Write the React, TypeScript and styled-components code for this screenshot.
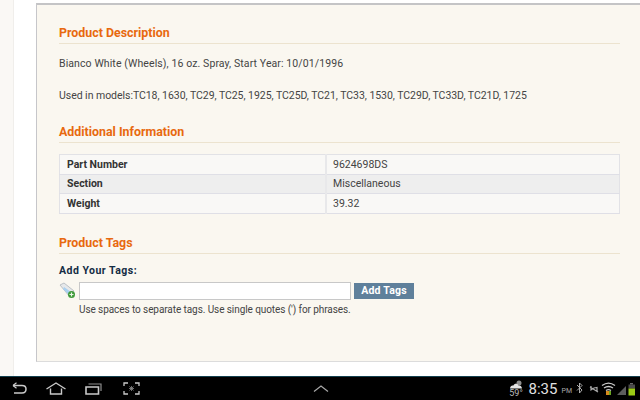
import styled, { createGlobalStyle } from 'styled-components';

const GlobalStyle = createGlobalStyle`
    html, body {
        margin: 0;
        padding: 0;
        background: #fff;
    }
    body {
        width: 640px;
        height: 400px;
        overflow: hidden;
        font-family: Roboto, "Liberation Sans", sans-serif;
    }
`;

const specs = [
    { label: 'Part Number', value: '9624698DS' },
    { label: 'Section', value: 'Miscellaneous' },
    { label: 'Weight', value: '39.32' },
];

const App = () => {
    return (
        <>
            <GlobalStyle />
            <Screen>
                <Page>
                    <LeftRail />
                    <Gutter>
                        <Panel>
                            <Heading>Product Description</Heading>
                            <Text $spacing={0.1}>Bianco White (Wheels), 16 oz. Spray, Start Year: 10/01/1996</Text>
                            <Text $gap={16} $spacing={-0.04}>
                                Used in models:TC18, 1630, TC29, TC25, 1925, TC25D, TC21, TC33, 1530, TC29D, TC33D, TC21D, 1725
                            </Text>
                            <Heading $top={19}>Additional Information</Heading>
                            <SpecTable>
                                <tbody>
                                    {specs.map((row, index) => (
                                        <SpecRow key={row.label} $even={index % 2 === 1}>
                                            <SpecLabel>{row.label}</SpecLabel>
                                            <SpecValue>{row.value}</SpecValue>
                                        </SpecRow>
                                    ))}
                                </tbody>
                            </SpecTable>
                            <Heading $top={20}>Product Tags</Heading>
                            <TagTitle>Add Your Tags:</TagTitle>
                            <TagForm>
                                <TagIcon />
                                <TagFields>
                                    <TagRow>
                                        <TagInput type="text" />
                                        <TagButton>Add Tags</TagButton>
                                    </TagRow>
                                    <Hint>Use spaces to separate tags. Use single quotes (') for phrases.</Hint>
                                </TagFields>
                            </TagForm>
                        </Panel>
                    </Gutter>
                </Page>
                <SystemBar>
                    <NavGroup>
                        <BackIcon />
                        <HomeIcon />
                        <RecentIcon />
                        <ShotIcon />
                    </NavGroup>
                    <ChevronIcon />
                    <Tray>
                        <Weather>
                            <CloudIcon />
                            <Temp>59°</Temp>
                        </Weather>
                        <Clock>8:35</Clock>
                        <Meridiem>PM</Meridiem>
                        <TrayIcons />
                    </Tray>
                </SystemBar>
            </Screen>
        </>
    );
};

export default App;

const TagIcon = () => (
    <TagSvg width="17" height="18" viewBox="0 0 17 18">
        <path d="M1 3 L5 1 L15 9 L11 15 Z" fill="#e6e8ea" stroke="#bcc1c5" strokeWidth="1" />
        <path d="M5 5 L12 10 L10 13 L4 7 Z" fill="#a9d0f0" />
        <circle cx="12.5" cy="12.5" r="3.5" fill="#3f9a3a" />
        <path d="M10.5 12.5 H14.5 M12.5 10.5 V14.5" stroke="#e8f6e4" strokeWidth="1.2" />
    </TagSvg>
);

const BackIcon = () => (
    <NavSvg width="15" height="13" viewBox="0 0 15 13">
        <path d="M1 3.5 H10 C13 3.5 14 5 14 7 C14 9.5 12.5 11 10 11 H2" fill="none" stroke="#c9c9c9" strokeWidth="1.5" />
        <path d="M1 3.5 L4.5 0.8 M1 3.5 L4.5 6.2" stroke="#c9c9c9" strokeWidth="1.2" />
    </NavSvg>
);

const HomeIcon = () => (
    <NavSvg width="20" height="13" viewBox="0 0 20 13">
        <path d="M0.5 7 L10 1 L19.5 7" fill="none" stroke="#c9c9c9" strokeWidth="1.4" />
        <path d="M4.5 6.5 V12 H15.5 V6.5" fill="none" stroke="#c9c9c9" strokeWidth="1.4" />
    </NavSvg>
);

const RecentIcon = () => (
    <NavSvg width="17" height="12" viewBox="0 0 17 12">
        <path d="M1 4 H13.5 V11 H1 Z" fill="none" stroke="#c9c9c9" strokeWidth="1.6" />
        <path d="M3.5 1 H16 V8" fill="none" stroke="#8e8e8e" strokeWidth="1.2" />
    </NavSvg>
);

const ShotIcon = () => (
    <NavSvg $shift={2} width="17" height="13" viewBox="0 0 17 13">
        <path d="M1 4 V1 H5 M12 1 H16 V4 M16 9 V12 H12 M5 12 H1 V9" fill="none" stroke="#c9c9c9" strokeWidth="1.3" />
        <path d="M8.5 4 V9 M6 6.5 H11 M6.5 4.5 L10.5 8.5 M10.5 4.5 L6.5 8.5" stroke="#8c8c8c" strokeWidth="0.8" />
    </NavSvg>
);

const ChevronIcon = () => (
    <ChevronSvg width="16" height="7" viewBox="0 0 16 7">
        <path d="M1 6.5 L8 1 L15 6.5" fill="none" stroke="#a8a8a8" strokeWidth="1.2" />
    </ChevronSvg>
);

const CloudIcon = () => (
    <svg width="15" height="9" viewBox="0 0 15 9">
        <circle cx="10" cy="3" r="2.5" fill="#8f8f8f" />
        <path d="M1 8.5 C1 6 3 5.5 4.5 5.5 C5 3.5 8.5 3 9.5 5.5 C11.5 5 13 6.5 13 8.5 Z" fill="#e4e4e4" />
    </svg>
);

const TrayIcons = () => (
    <TraySvg width="61" height="16" viewBox="0 0 61 16">
        <path d="M1 4 L6 9 L3.5 12 V2 L6 4.5 L1 9.5" fill="none" stroke="#bdbdbd" strokeWidth="0.9" />
        <path d="M14 6 L22 11 M15 5 V9 L18 7 L21 6.5 V10" fill="none" stroke="#a9a9a9" strokeWidth="1.2" />
        <path d="M26 4.5 C30 1.5 35 1.5 39 4.5 M28 7 C31 5 34 5 37 7 M30 9.5 C31.5 8.5 33.5 8.5 35 9.5" fill="none" stroke="#c9c9c9" strokeWidth="1.3" />
        <rect x="30" y="10" width="3" height="4" fill="#d68a1d" />
        <rect x="33" y="10" width="2" height="4" fill="#6aa51e" />
        <path d="M41 14 L50 5 V14 Z" fill="#5d5d5d" />
        <rect x="54" y="2" width="3" height="1.5" fill="#6a6a6a" />
        <rect x="52.5" y="3.5" width="6.5" height="4" fill="#4b4b4b" />
        <rect x="52.5" y="7.5" width="6.5" height="7" fill="#9ccc16" />
    </TraySvg>
);

const Screen = styled.div`
    width: 640px;
    height: 400px;
    display: flex;
    flex-direction: column;
    background: #fff;
`;

const Page = styled.div`
    display: flex;
    height: 376px;
`;

const LeftRail = styled.div`
    width: 14px;
    background: #faf8f5;
    border-right: 1px solid #f0eeeb;
    box-sizing: border-box;
`;

const Gutter = styled.div`
    flex: 1;
    padding: 3px 0 14px 22px;
    min-width: 0;
    display: flex;
`;

const Panel = styled.div`
    flex: 1;
    box-sizing: border-box;
    background: #faf7f0;
    border-top: 2px solid #c4c4c6;
    border-left: 1px solid #c6c6ca;
    border-bottom: 1px solid #dcdcdc;
    padding: 19px 20px 0 22px;
    min-width: 0;
`;

const Heading = styled.h2<{ $top?: number }>`
    margin: ${(props) => props.$top ?? 0}px 0 0;
    padding-bottom: 2px;
    font-size: 12.4px;
    line-height: 17px;
    font-weight: 700;
    color: #e8690f;
    border-bottom: 1px solid #ece3cf;
`;

const Text = styled.p<{ $gap?: number; $spacing?: number }>`
    margin: ${(props) => props.$gap ?? 12}px 0 0;
    font-size: 10.5px;
    line-height: 16px;
    letter-spacing: ${(props) => props.$spacing ?? 0}px;
    color: #444;
`;

const SpecTable = styled.table`
    width: 561px;
    margin-top: 11px;
    border-collapse: collapse;
    table-layout: fixed;
    border: 1px solid #e2e2e6;
`;

const SpecRow = styled.tr<{ $even: boolean }>`
    height: 19.5px;
    background: ${(props) => (props.$even ? '#eeeeee' : '#f9f8f6')};
    border-bottom: 1px solid #dfdfe6;
`;

const SpecLabel = styled.td`
    width: 258px;
    padding: 0 0 0 7px;
    font-size: 10.5px;
    font-weight: 700;
    color: #333;
    border-right: 2px solid #e8e8ea;
`;

const SpecValue = styled.td`
    padding: 0 0 0 6px;
    font-size: 10.5px;
    color: #444;
`;

const TagTitle = styled.h3`
    margin: 10px 0 0;
    font-size: 10.5px;
    line-height: 14px;
    font-weight: 700;
    letter-spacing: 0.48px;
    color: #142c44;
`;

const TagForm = styled.div`
    display: flex;
    margin-top: 4px;
`;

const TagSvg = styled.svg`
    display: block;
    margin-right: 3px;
    flex: none;
`;

const TagFields = styled.div`
    display: flex;
    flex-direction: column;
`;

const TagRow = styled.div`
    display: flex;
    align-items: center;
    gap: 3px;
`;

const TagInput = styled.input`
    width: 272px;
    height: 18px;
    box-sizing: border-box;
    background: #fff;
    border: 1px solid #c8c8c8;
    padding: 0;
    outline: none;
`;

const TagButton = styled.button`
    width: 60px;
    height: 16px;
    padding: 0;
    border: none;
    background: #5f809b;
    color: #fff;
    font-family: inherit;
    font-size: 10.5px;
    font-weight: 700;
    letter-spacing: 0.2px;
`;

const Hint = styled.div`
    margin-top: 3px;
    font-size: 10px;
    line-height: 13px;
    letter-spacing: -0.08px;
    color: #444;
`;

const SystemBar = styled.div`
    position: relative;
    height: 24px;
    box-sizing: border-box;
    background: #000;
    border-top: 1px solid #12404f;
    display: flex;
    align-items: center;
    justify-content: space-between;
    padding: 0 3px 0 12px;
`;

const NavGroup = styled.div`
    display: flex;
    align-items: center;
    gap: 19px;
`;

const NavSvg = styled.svg<{ $shift?: number }>`
    display: block;
    margin-left: ${(props) => props.$shift ?? 0}px;
`;

const ChevronSvg = styled.svg`
    position: absolute;
    left: 313px;
    top: 8px;
`;

const Tray = styled.div`
    display: flex;
    align-items: center;
    color: #d8d8d8;
`;

const Weather = styled.div`
    display: flex;
    flex-direction: column;
    align-items: center;
    margin-right: 5px;
`;

const Temp = styled.span`
    font-size: 9px;
    line-height: 8px;
    color: #bdbdbd;
`;

const Clock = styled.span`
    font-size: 15px;
    line-height: 20px;
    color: #e0e0e0;
`;

const Meridiem = styled.span`
    font-size: 7px;
    margin: 4px 4px 0 4px;
    color: #a8a8a8;
`;

const TraySvg = styled.svg`
    display: block;
`;
